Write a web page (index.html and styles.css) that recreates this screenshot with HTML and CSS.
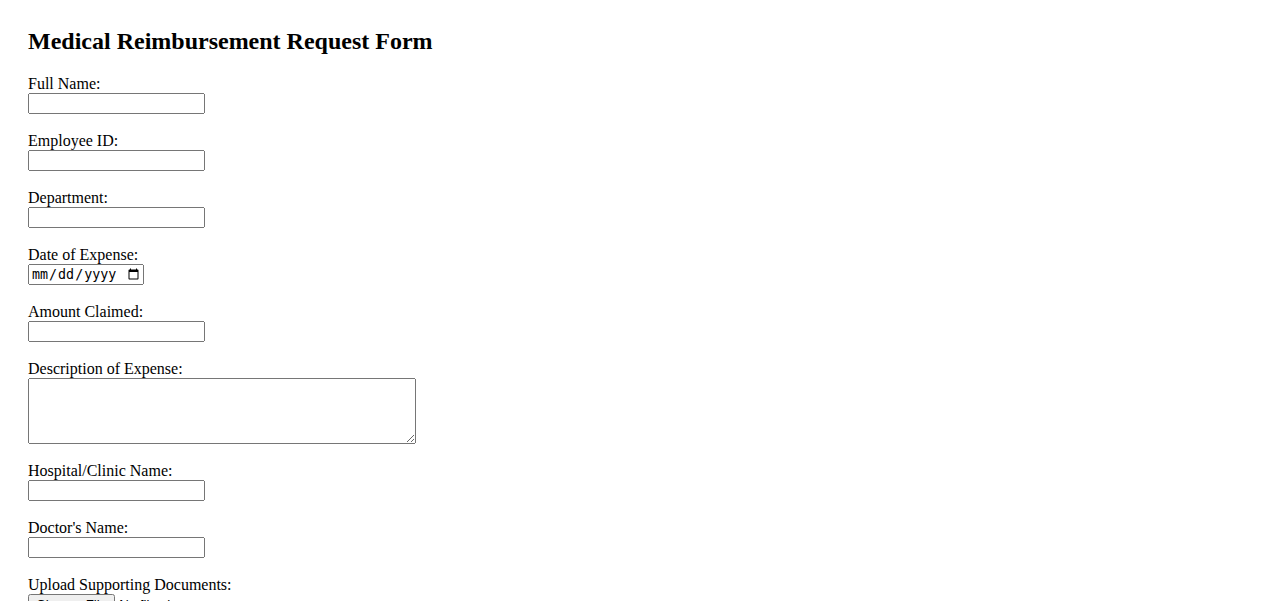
FILE: index.html
```
<!DOCTYPE html>
<html>
<head>
    <title>Medical Reimbursement Request Form</title>
    <meta name="viewport" content="width=device-width, initial-scale=1" />
    <link rel="stylesheet" href="styles.css">
</head>
<body>
    <div class="wrap">
        <h2>Medical Reimbursement Request Form</h2>
        <form id="reimbForm">
            <label for="fullName">Full Name:</label><br />
            <input type="text" id="fullName" name="fullName" class="txt" /><br /><br />

            <label for="empId">Employee ID:</label><br />
            <input type="text" id="empId" name="empId" class="txt" /><br /><br />

            <label for="dept">Department:</label><br />
            <input type="text" id="dept" name="dept" class="txt" /><br /><br />

            <label for="expDate">Date of Expense:</label><br />
            <input type="date" id="expDate" name="expDate" class="dt" /><br /><br />

            <label for="amount">Amount Claimed:</label><br />
            <input type="text" id="amount" name="amount" class="txt" /><br /><br />

            <label for="desc">Description of Expense:</label><br />
            <textarea id="desc" name="desc" class="desc"></textarea><br /><br />

            <label for="hospital">Hospital/Clinic Name:</label><br />
            <input type="text" id="hospital" name="hospital" class="txt" /><br /><br />

            <label for="doctor">Doctor's Name:</label><br />
            <input type="text" id="doctor" name="doctor" class="txt" /><br /><br />

            <label for="docs">Upload Supporting Documents:</label><br />
            <input type="file" id="docs" name="docs" /><br /><br />

            <input type="submit" value="Submit Request" />
        </form>
    </div>
</body>
</html>
```

FILE: styles.css
```
body {
    margin: 0;
    font-family: "Liberation Serif", "Times New Roman", serif;
    font-size: 16px;
}

.wrap {
    padding: 28px;
}

h2 {
    margin: 0 0 20px 0;
    font-size: 24px;
}

.txt {
    box-sizing: border-box;
    width: 177px;
}

.dt {
    box-sizing: border-box;
    width: 116px;
}

.desc {
    box-sizing: border-box;
    width: 388px;
    height: 66px;
    vertical-align: bottom;
}
```
